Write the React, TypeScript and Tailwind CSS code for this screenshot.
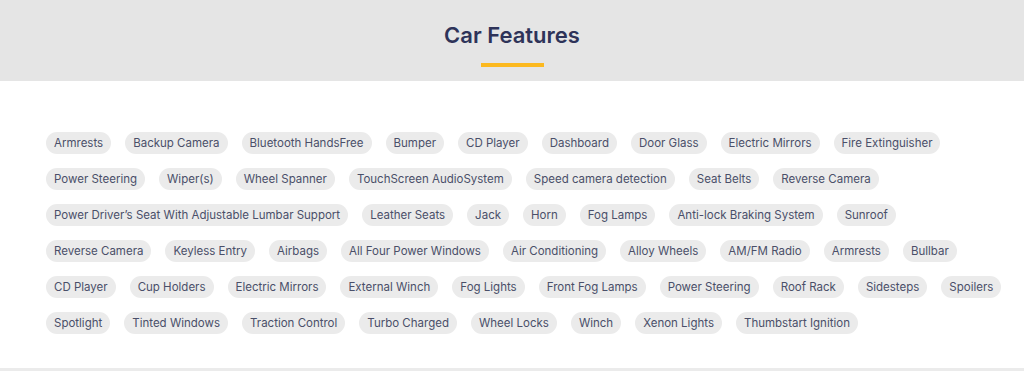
import React from 'react';

const features = [
  'Armrests', 'Backup Camera', 'Bluetooth HandsFree', 'Bumper', 'CD Player', 'Dashboard', 'Door Glass',
  'Electric Mirrors', 'Fire Extinguisher', 'Power Steering', 'Wiper(s)', 'Wheel Spanner',
  'TouchScreen AudioSystem', 'Speed camera detection', 'Seat Belts', 'Reverse Camera',
  'Power Driver’s Seat With Adjustable Lumbar Support', 'Leather Seats', 'Jack', 'Horn', 'Fog Lamps',
  'Anti-lock Braking System', 'Sunroof', 'Reverse Camera', 'Keyless Entry', 'Airbags',
  'All Four Power Windows', 'Air Conditioning', 'Alloy Wheels', 'AM/FM Radio', 'Armrests', 'Bullbar',
  'CD Player', 'Cup Holders', 'Electric Mirrors', 'External Winch', 'Fog Lights', 'Front Fog Lamps',
  'Power Steering', 'Roof Rack', 'Sidesteps', 'Spoilers', 'Spotlight', 'Tinted Windows',
  'Traction Control', 'Turbo Charged', 'Wheel Locks', 'Winch', 'Xenon Lights', 'Thumbstart Ignition',
];

export default function App() {
  return (
    <div className="w-[1024px] h-[371px] bg-white font-['Inter',sans-serif] flex flex-col overflow-hidden">
      {/* Section heading */}
      <div className="h-[81px] shrink-0 bg-[#e5e5e5] flex flex-col items-center pt-[20px]">
        <h2 className="text-[22px] leading-[30px] font-semibold text-[#2e3359]">Car Features</h2>
        <div className="mt-[13px] w-[63px] h-[4px] bg-[#fcb91f]" />
      </div>

      {/* Feature chips */}
      <div className="flex-1 min-h-0 pl-[46px] pr-[22px] pt-[51px]">
        <div className="flex flex-wrap gap-x-[14px] gap-y-[14px]">
          {features.map((f, i) => (
            <span
              key={i}
              className="h-[22px] px-[8px] rounded-full bg-[#ebebeb] text-[11.5px] leading-[22px] text-[#4a4f69] whitespace-nowrap"
            >
              {f}
            </span>
          ))}
        </div>
      </div>

      <div className="h-[3px] shrink-0 bg-[#ebebeb]" />
    </div>
  );
}
